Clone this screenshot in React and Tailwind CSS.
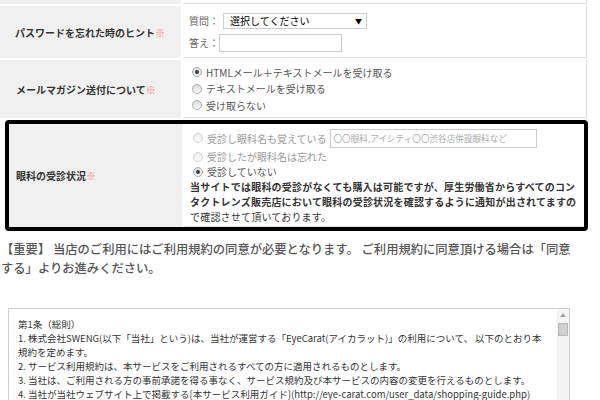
import React from 'react';

const Radio = ({ checked, light }) => (
  <span
    className={`inline-flex h-[10px] w-[10px] shrink-0 items-center justify-center rounded-full border bg-linear-to-b ${
      light ? 'border-[#cfcfcf] from-[#eeeeee] to-[#fbfbfb]' : 'border-[#a9a9a9] from-[#dedede] to-[#f8f8f8]'
    }`}
  >
    {checked && <span className="h-[4px] w-[4px] rounded-full bg-[#3a3a3a]" />}
  </span>
);

const Req = () => <span className="text-[#ff7a7a]">※</span>;

export default function App() {
  return (
    <div className="h-[400px] w-[600px] overflow-hidden bg-white font-['Noto_Sans_CJK_JP','Noto_Sans',sans-serif] text-[#333]">
      {/* previous row (cut off) */}
      <div className="flex h-[4px] w-[587px] gap-[2px]">
        <div className="w-[181px] bg-[#f0f0f0]" />
        <div className="flex-1 border-r border-b border-[#dddddd]" />
      </div>

      {/* password hint */}
      <div className="mt-[2px] flex h-[52px] w-[587px] gap-[2px]">
        <div className="flex w-[181px] items-center bg-[#f0f0f0] pl-[15px] text-[10px] font-bold">
          パスワードを忘れた時のヒント<Req />
        </div>
        <div className="flex-1 border-r border-b border-[#dddddd] pt-[7px] pl-[6px] text-[10px] text-[#666]">
          <div className="flex h-[16px] items-center">
            <span className="w-[34px] leading-none">質問：</span>
            <div className="flex h-[16px] w-[144px] items-center justify-between border border-[#cccccc] bg-white pr-[4px] pl-[6px] text-black">
              <span className="leading-none">選択してください</span>
              <span className="text-[7px] leading-none">▼</span>
            </div>
          </div>
          <div className="mt-[5px] flex h-[18px] items-center">
            <span className="w-[30px] leading-none">答え：</span>
            <div className="h-[18px] w-[123px] border border-[#cccccc] bg-white" />
          </div>
        </div>
      </div>

      {/* mail magazine */}
      <div className="mt-[2px] flex h-[58px] w-[587px] gap-[2px]">
        <div className="flex w-[181px] items-center bg-[#f0f0f0] pl-[16px] text-[10px] font-bold">
          メールマガジン送付について<Req />
        </div>
        <div className="flex-1 border-r border-b border-[#dddddd] pt-[4px] pl-[9px] text-[10px] text-[#555]">
          <div className="flex h-[16.5px] items-center gap-[4px]">
            <Radio checked />
            <span>HTMLメール＋テキストメールを受け取る</span>
          </div>
          <div className="flex h-[16.5px] items-center gap-[4px]">
            <Radio />
            <span>テキストメールを受け取る</span>
          </div>
          <div className="flex h-[16.5px] items-center gap-[4px]">
            <Radio />
            <span>受け取らない</span>
          </div>
        </div>
      </div>

      {/* highlighted row */}
      <div className="mt-[2px] ml-[5px] flex h-[111px] w-[583px] gap-[2px] rounded-[4px] border-[4px] border-black">
        <div className="flex w-[173px] items-center bg-[#f0f0f0] pl-[7px] text-[10px] font-bold">
          眼科の受診状況<Req />
        </div>
        <div className="flex-1 border-b border-[#dddddd] pt-[4px] pl-[9px] text-[10px]">
          <div className="flex h-[20px] items-center gap-[4px] text-[#999]">
            <Radio light />
            <span>受診し眼科名も覚えている</span>
            <div className="ml-[-1px] flex h-[19px] w-[207px] items-center overflow-hidden border border-[#cccccc] pl-[3px] text-[8.6px] whitespace-nowrap text-[#aaa]">
              〇〇眼科,アイシティ〇〇渋谷店併設眼科など
            </div>
          </div>
          <div className="mt-[1px] flex h-[15px] items-center gap-[4px] text-[#999]">
            <Radio light />
            <span>受診したが眼科名は忘れた</span>
          </div>
          <div className="flex h-[15px] items-center gap-[4px] text-[#555]">
            <Radio checked />
            <span>受診していない</span>
          </div>
          <div className="ml-[-3px] text-[10px] leading-[15px] tracking-[0.2px] whitespace-nowrap text-[#333]">
            <div className="font-bold">当サイトでは眼科の受診がなくても購入は可能ですが、厚生労働省からすべてのコン</div>
            <div className="font-bold">タクトレンズ販売店において眼科の受診状況を確認するように通知が出されてますの</div>
            <div>で確認させて頂いております。</div>
          </div>
        </div>
      </div>

      {/* notice */}
      <div className="mt-[9px] pl-[1px] text-[12.3px] leading-[19px] font-medium whitespace-nowrap text-[#555]">
        <div>【重要】 当店のご利用にはご利用規約の同意が必要となります。 ご利用規約に同意頂ける場合は「同意</div>
        <div>する」よりお進みください。</div>
      </div>

      {/* terms box */}
      <div className="mt-[30px] ml-[8px] flex h-[120px] w-[562px] border border-[#cccccc]">
        <div className="flex-1 overflow-hidden pt-[8px] pl-[9px] text-[9.5px] leading-[14px] whitespace-nowrap text-[#333]">
          <div>第1条（総則）</div>
          <div>1. 株式会社SWENG(以下「当社」という)は、当社が運営する「EyeCarat(アイカラット)」の利用について、 以下のとおり本</div>
          <div>規約を定めます。</div>
          <div>2. サービス利用規約は、本サービスをご利用されるすべての方に適用されるものとします。</div>
          <div>3. 当社は、ご利用される方の事前承諾を得る事なく、サービス規約及び本サービスの内容の変更を行えるものとします。</div>
          <div>4. 当社が当社ウェブサイト上で掲載する[本サービス利用ガイド](http://eye-carat.com/user_data/shopping-guide.php)</div>
          <div>は、本規約の一部を構成するものとします。</div>
        </div>
        <div className="flex w-[12px] flex-col items-center bg-[#f4f4f4]">
          <div className="flex h-[12px] w-full items-center justify-center">
            <svg width="6" height="4" viewBox="0 0 6 4">
              <path d="M0 4 L3 0 L6 4 Z" fill="#a3a3a3" />
            </svg>
          </div>
          <div className="mt-[2px] h-[13px] w-[10px] border border-[#b8b8b8] bg-[#d0d0d0]" />
        </div>
      </div>
    </div>
  );
}
